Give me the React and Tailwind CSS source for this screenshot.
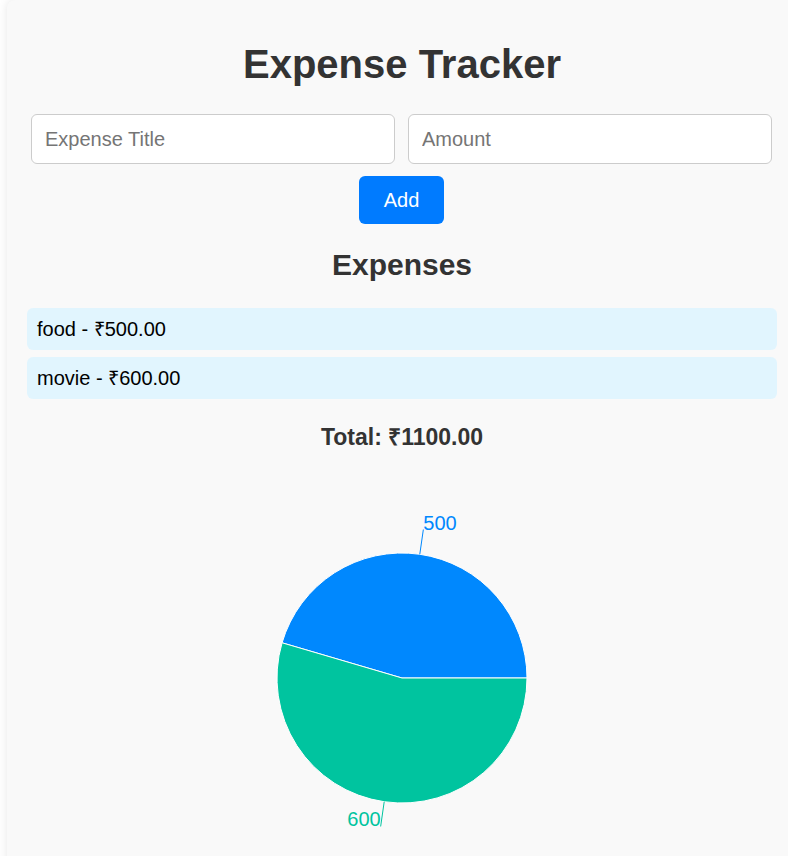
import React, { useState } from 'react';

const expenses = [
  { title: 'food', amount: 500 },
  { title: 'movie', amount: 600 },
];

const COLORS = ['#0088FE', '#00C49F'];

const ExpensePie = ({ data }) => {
  const cx = 200;
  const cy = 200;
  const r = 125;
  const total = data.reduce((s, d) => s + d.amount, 0);
  const toPoint = (deg, radius) => {
    const rad = (deg * Math.PI) / 180;
    return [cx + radius * Math.cos(rad), cy - radius * Math.sin(rad)];
  };

  let start = 0;
  const slices = data.map((d, i) => {
    const sweep = (d.amount / total) * 360;
    const end = start + sweep;
    const mid = start + sweep / 2;
    const [x1, y1] = toPoint(start, r);
    const [x2, y2] = toPoint(end, r);
    const [lx1, ly1] = toPoint(mid, r);
    const [lx2, ly2] = toPoint(mid, r + 25);
    const large = sweep > 180 ? 1 : 0;
    const slice = {
      path: `M${cx},${cy} L${x1},${y1} A${r},${r} 0 ${large} 0 ${x2},${y2} Z`,
      line: [lx1, ly1, lx2, ly2],
      anchor: lx2 >= cx ? 'start' : 'end',
      color: COLORS[i % COLORS.length],
      value: d.amount,
    };
    start = end;
    return slice;
  });

  return (
    <svg width="400" height="400" viewBox="0 0 400 400">
      {slices.map((s, i) => (
        <path key={i} d={s.path} fill={s.color} stroke="#fff" strokeWidth="1" />
      ))}
      {slices.map((s, i) => (
        <g key={'l' + i}>
          <line x1={s.line[0]} y1={s.line[1]} x2={s.line[2]} y2={s.line[3]} stroke={s.color} strokeWidth="1" />
          <text
            x={s.line[2]}
            y={s.line[3]}
            textAnchor={s.anchor}
            fill={s.color}
            fontSize="20"
            fontFamily="'Liberation Sans', Arial, sans-serif"
          >
            {s.value}
          </text>
        </g>
      ))}
    </svg>
  );
};

export default function App() {
  const [title, setTitle] = useState('');
  const [amount, setAmount] = useState('');
  const total = expenses.reduce((s, e) => s + e.amount, 0);

  return (
    <div className="h-[856px] w-full overflow-hidden bg-white font-['Liberation_Sans',Arial,sans-serif]">
      <div className="ml-[7px] min-h-[900px] w-[790px] rounded-lg bg-[#f9f9f9] px-[20px] shadow-[0_0_10px_rgba(0,0,0,0.1)]">
        <h1 className="pt-[40px] text-center text-[40px] font-bold leading-[48px] text-[#333]">
          Expense Tracker
        </h1>

        {/* Form */}
        <div className="mt-[26px] flex gap-[13px] pl-[4px] pr-[5px]">
          <input
            value={title}
            onChange={(e) => setTitle(e.target.value)}
            placeholder="Expense Title"
            className="h-[50px] flex-1 rounded-[6px] border border-[#ccc] bg-white px-[13px] text-[20px] text-black placeholder:text-[#757575] outline-none"
          />
          <input
            value={amount}
            onChange={(e) => setAmount(e.target.value)}
            placeholder="Amount"
            className="h-[50px] flex-1 rounded-[6px] border border-[#ccc] bg-white px-[13px] text-[20px] text-black placeholder:text-[#757575] outline-none"
          />
        </div>
        <div className="mt-[12px] flex justify-center pr-[1px]">
          <button className="h-[48px] w-[85px] rounded-[6px] bg-[#007bff] text-[20px] text-white">
            Add
          </button>
        </div>

        <h2 className="mt-[23px] text-center text-[30px] font-bold leading-[36px] text-[#333]">
          Expenses
        </h2>

        {/* List */}
        <ul className="mt-[25px] flex flex-col gap-[7px]">
          {expenses.map((e) => (
            <li
              key={e.title}
              className="flex h-[42px] items-center rounded-[6px] bg-[#e1f5fe] px-[10px] text-[20px] text-black"
            >
              {e.title} - ₹{e.amount.toFixed(2)}
            </li>
          ))}
        </ul>

        <h3 className="mt-[24px] text-center text-[23px] font-bold leading-[28px] text-[#333]">
          Total: ₹{total.toFixed(2)}
        </h3>

        <div className="mt-[27px] flex justify-center">
          <ExpensePie data={expenses} />
        </div>
      </div>
    </div>
  );
}
